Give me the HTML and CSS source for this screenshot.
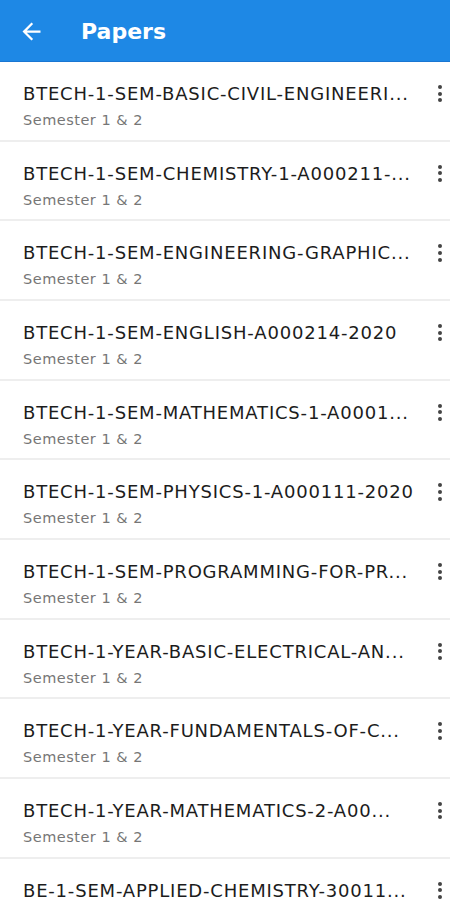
FILE: index.html
```html
<!DOCTYPE html>
<html lang="en">
<head>
  <meta charset="UTF-8" />
  <meta name="viewport" content="width=device-width, initial-scale=1.0"/>
  <title>Papers</title>
  <link rel="stylesheet" href="styles.css">
</head>
<body>
  <header class="appbar">
    <svg class="back" viewBox="0 0 24 24" width="27" height="27">
      <path d="M20 11H7.83l5.59-5.59L12 4l-8 8 8 8 1.41-1.41L7.83 13H20v-2z" fill="#fff"/>
    </svg>
    <h1>Papers</h1>
  </header>

  <ul class="list">
    <li class="item">
      <div class="text">
        <div class="title">BTECH-1-SEM-BASIC-CIVIL-ENGINEERI...</div>
        <div class="sub">Semester 1 &amp; 2</div>
      </div>
      <span class="more"><i></i><i></i><i></i></span>
    </li>
    <li class="item">
      <div class="text">
        <div class="title">BTECH-1-SEM-CHEMISTRY-1-A000211-...</div>
        <div class="sub">Semester 1 &amp; 2</div>
      </div>
      <span class="more"><i></i><i></i><i></i></span>
    </li>
    <li class="item">
      <div class="text">
        <div class="title">BTECH-1-SEM-ENGINEERING-GRAPHIC...</div>
        <div class="sub">Semester 1 &amp; 2</div>
      </div>
      <span class="more"><i></i><i></i><i></i></span>
    </li>
    <li class="item">
      <div class="text">
        <div class="title">BTECH-1-SEM-ENGLISH-A000214-2020</div>
        <div class="sub">Semester 1 &amp; 2</div>
      </div>
      <span class="more"><i></i><i></i><i></i></span>
    </li>
    <li class="item">
      <div class="text">
        <div class="title">BTECH-1-SEM-MATHEMATICS-1-A0001...</div>
        <div class="sub">Semester 1 &amp; 2</div>
      </div>
      <span class="more"><i></i><i></i><i></i></span>
    </li>
    <li class="item">
      <div class="text">
        <div class="title">BTECH-1-SEM-PHYSICS-1-A000111-2020</div>
        <div class="sub">Semester 1 &amp; 2</div>
      </div>
      <span class="more"><i></i><i></i><i></i></span>
    </li>
    <li class="item">
      <div class="text">
        <div class="title">BTECH-1-SEM-PROGRAMMING-FOR-PR...</div>
        <div class="sub">Semester 1 &amp; 2</div>
      </div>
      <span class="more"><i></i><i></i><i></i></span>
    </li>
    <li class="item">
      <div class="text">
        <div class="title">BTECH-1-YEAR-BASIC-ELECTRICAL-AN...</div>
        <div class="sub">Semester 1 &amp; 2</div>
      </div>
      <span class="more"><i></i><i></i><i></i></span>
    </li>
    <li class="item">
      <div class="text">
        <div class="title">BTECH-1-YEAR-FUNDAMENTALS-OF-C...</div>
        <div class="sub">Semester 1 &amp; 2</div>
      </div>
      <span class="more"><i></i><i></i><i></i></span>
    </li>
    <li class="item">
      <div class="text">
        <div class="title">BTECH-1-YEAR-MATHEMATICS-2-A00...</div>
        <div class="sub">Semester 1 &amp; 2</div>
      </div>
      <span class="more"><i></i><i></i><i></i></span>
    </li>
    <li class="item">
      <div class="text">
        <div class="title">BE-1-SEM-APPLIED-CHEMISTRY-30011...</div>
        <div class="sub">Semester 1 &amp; 2</div>
      </div>
      <span class="more"><i></i><i></i><i></i></span>
    </li>
  </ul>
</body>
</html>
```

FILE: styles.css
```css
body {
  margin: 0;
  font-family: "DejaVu Sans", sans-serif;
  background-color: #fff;
  overflow: hidden;
}

.appbar {
  height: 62px;
  background-color: #1e88e5;
  border-bottom: 1px solid #1976d2;
  box-sizing: border-box;
  display: flex;
  align-items: center;
  padding: 2px 0 0 18px;
}

.appbar h1 {
  margin: 0 0 0 36px;
  color: #fff;
  font-size: 22px;
  font-weight: 700;
}

.list {
  list-style: none;
  margin: 0;
  padding: 0;
}

.item {
  height: 79.67px;
  box-sizing: border-box;
  border-bottom: 2px solid #eeeeee;
  display: flex;
  align-items: flex-start;
  padding: 20px 0 0 23px;
}

.text {
  flex: 1;
  min-width: 0;
}

.title {
  font-size: 18px;
  letter-spacing: 0.8px;
  color: #1c1c1c;
  white-space: nowrap;
  overflow: hidden;
  line-height: 24px;
}

.sub {
  font-size: 14.5px;
  letter-spacing: 0.5px;
  color: #767676;
  line-height: 20px;
  margin-top: 4px;
}

.more {
  width: 4px;
  display: flex;
  flex-direction: column;
  gap: 2.7px;
  margin: 3px 8px 0 10px;
}

.more i {
  width: 4px;
  height: 4px;
  border-radius: 50%;
  background-color: #444;
}
```
